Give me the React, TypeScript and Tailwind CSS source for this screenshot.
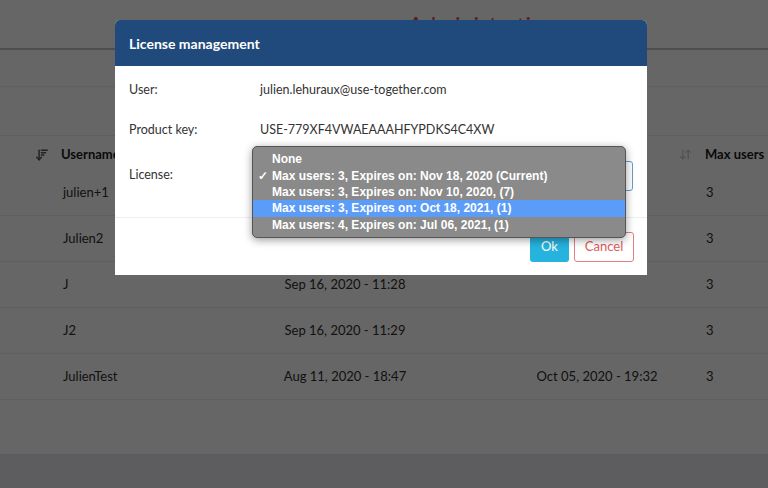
import { ArrowDownUp, ArrowDownWideNarrow, ChevronDown } from "lucide-react";

const rows = [
  { name: "julien+1", created: "", last: "", max: "3" },
  { name: "Julien2", created: "", last: "", max: "3" },
  { name: "J", created: "Sep 16, 2020 - 11:28", last: "", max: "3" },
  { name: "J2", created: "Sep 16, 2020 - 11:29", last: "", max: "3" },
  { name: "JulienTest", created: "Aug 11, 2020 - 18:47", last: "Oct 05, 2020 - 19:32", max: "3" },
];

const options = [
  { label: "None", checked: false, active: false },
  { label: "Max users: 3, Expires on: Nov 18, 2020 (Current)", checked: true, active: false },
  { label: "Max users: 3, Expires on: Nov 10, 2020, (7)", checked: false, active: false },
  { label: "Max users: 3, Expires on: Oct 18, 2021, (1)", checked: false, active: true },
  { label: "Max users: 4, Expires on: Jul 06, 2021, (1)", checked: false, active: false },
];

function Page() {
  return (
    <div className="flex h-full flex-col bg-white text-[13px] text-[#2e2e2e]">
      <header className="relative h-[50px] shrink-0 border-b-2 border-[#c4c4c4]">
        <h1 className="pl-[408px] pt-[8px] text-[23px] font-normal text-[#e04848]">Administration</h1>
      </header>
      <div className="h-[37px] shrink-0 border-b border-[#eeeeee]" />
      <div className="h-[49px] shrink-0 border-b border-[#eeeeee]" />
      <div className="grid h-[34px] shrink-0 grid-cols-[260px_170px_250px_88px] items-start pt-[9px] font-bold text-[#1a1a1a]">
        <div className="flex items-center gap-[12px] pl-[35px]">
          <ArrowDownWideNarrow className="h-[14px] w-[14px] text-[#555]" strokeWidth={2.5} />
          <span>Username</span>
        </div>
        <div />
        <div />
        <div className="-ml-[1px] flex items-center gap-[13px]">
          <ArrowDownUp className="h-[13px] w-[13px] text-[#cfcfcf]" strokeWidth={2.5} />
          <span>Max users</span>
        </div>
      </div>
      {rows.map((r) => (
        <div
          key={r.name}
          className="grid h-[46px] shrink-0 grid-cols-[260px_170px_250px_88px] items-center border-b border-[#eeeeee]"
        >
          <div className="pl-[63px]">{r.name}</div>
          <div className="text-center">{r.created}</div>
          <div className="pl-[84px] text-center">{r.last}</div>
          <div className="pl-[26px]">{r.max}</div>
        </div>
      ))}
      <div className="h-[54px] shrink-0" />
      <div className="flex-1 bg-[#e8e8ed]" />
    </div>
  );
}

function Modal() {
  return (
    <div className="absolute left-[115px] top-[20px] flex h-[255px] w-[532px] flex-col rounded-t-[5px] bg-white text-[12.5px] text-[#333]">
      <div className="flex h-[46px] items-center rounded-t-[5px] bg-[#1f4a7b] px-[14px] text-[14px] font-bold text-white">
        License management
      </div>
      <div className="flex flex-col px-[14px]">
        <div className="flex h-[39px] items-end pb-[5px]">
          <span className="w-[131px]">User:</span>
          <span>julien.lehuraux@use-together.com</span>
        </div>
        <div className="flex h-[40px] items-end pb-[5px]">
          <span className="w-[131px]">Product key:</span>
          <span>USE-779XF4VWAEAAAHFYPDKS4C4XW</span>
        </div>
        <div className="relative flex h-[50px] items-center pt-[11px]">
          <span className="w-[123px]">License:</span>
          <div className="flex h-[30px] w-[381px] items-center justify-end rounded-[3px] border border-[#5d9ed6] pr-[4px]">
            <ChevronDown className="h-[12px] w-[12px] text-[#555]" strokeWidth={2.5} />
          </div>
        </div>
      </div>
      <div className="mt-[22px] border-t border-[#eeeeee]" />
      <div className="flex justify-end gap-[5px] px-[13px] pt-[14px]">
        <button className="h-[30px] w-[39px] rounded-[3px] bg-[#26b3de] text-[13px] text-white">Ok</button>
        <button className="h-[30px] w-[60px] rounded-[3px] border border-[#e47e7e] bg-white text-[13px] text-[#e05a5a]">
          Cancel
        </button>
      </div>
    </div>
  );
}

function Dropdown() {
  return (
    <div
      className="absolute left-[252px] top-[146px] w-[374px] rounded-[5px] border border-[#555] bg-[#8a8a8a] py-[4px] text-[12px] font-semibold text-white shadow-[0_2px_8px_rgba(0,0,0,0.4)]"
      style={{ fontFamily: '"Liberation Sans", Arial, sans-serif' }}
    >
      {options.map((o) => (
        <div
          key={o.label}
          className={`flex h-[16.4px] items-center leading-none ${o.active ? "bg-[#5b9cf9]" : ""}`}
        >
          <span className="w-[19px] pl-[5px] text-[12px]">{o.checked ? "✓" : ""}</span>
          <span>{o.label}</span>
        </div>
      ))}
    </div>
  );
}

export default function App() {
  return (
    <div
      className="relative h-[488px] w-[768px] overflow-hidden"
      style={{ fontFamily: 'Lato, "Open Sans", sans-serif' }}
    >
      <Page />
      <div className="absolute inset-0 bg-black/60" />
      <Modal />
      <Dropdown />
    </div>
  );
}
